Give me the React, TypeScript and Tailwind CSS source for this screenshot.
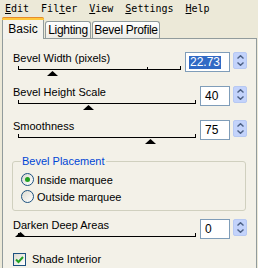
import React from "react";

function Track({ width, end, thumb, mid, dark }: { width: number; end: number; thumb: number; mid?: number; dark?: boolean }) {
  return (
    <svg width={width} height={14} className="block" shapeRendering="crispEdges">
      <rect x={5} y={4} width={end - 5 + 1} height={1} fill="#000" />
      <rect x={5} y={1} width={1} height={3} fill="#000" />
      <rect x={end} y={1} width={1} height={3} fill="#000" />
      {mid !== undefined && <rect x={mid} y={2} width={1} height={2} fill="#000" />}
      {dark ? (
        <polygon points={`${thumb - 5},5 ${thumb + 6},5 ${thumb + 0.5},0`} fill="#000" shapeRendering="auto" />
      ) : (
        <polygon points={`${thumb - 5},11 ${thumb + 6},11 ${thumb + 0.5},6`} fill="#000" shapeRendering="auto" />
      )}
    </svg>
  );
}

function Spinner() {
  return (
    <div className="ml-[3px] mt-[1px] w-[14px] h-[17px] rounded-[2px] bg-[#c3d3fb] border border-[#b7c9f3] flex flex-col items-center justify-center gap-[3px]">
      <svg width="7" height="4" viewBox="0 0 7 4" className="block">
        <path d="M0.5 3.5 L3.5 0.7 L6.5 3.5" fill="none" stroke="#4d6185" strokeWidth="1.4" />
      </svg>
      <svg width="7" height="4" viewBox="0 0 7 4" className="block">
        <path d="M0.5 0.5 L3.5 3.3 L6.5 0.5" fill="none" stroke="#4d6185" strokeWidth="1.4" />
      </svg>
    </div>
  );
}

function Row({
  label,
  leftW,
  end,
  thumb,
  mid,
  inputW,
  value,
  selected,
  dark,
}: {
  label: string;
  leftW: number;
  end: number;
  thumb: number;
  mid?: number;
  inputW: string;
  value: string;
  selected?: boolean;
  dark?: boolean;
}) {
  return (
    <div className="flex h-[34px] shrink-0">
      <div className="ml-[10px] flex flex-col" style={{ width: leftW }}>
        <div className="h-[14px] leading-[14px] text-[11px] text-black whitespace-nowrap">{label}</div>
        <Track width={leftW} end={end} thumb={thumb} mid={mid} dark={dark} />
      </div>
      <div className={`ml-[2px] mt-[1px] h-[20px] ${inputW} border border-[#7f9db9] bg-white pl-[3px] flex items-center`}>
        {selected ? (
          <span className="bg-[#316ac5] text-white text-[12px] leading-[13px] px-[1px]">{value}</span>
        ) : (
          <span className="text-black text-[12px] leading-[13px] pl-[1px]">{value}</span>
        )}
      </div>
      <Spinner />
    </div>
  );
}

function Radio({ checked, label }: { checked?: boolean; label: string }) {
  return (
    <div className="flex items-center h-[17px]">
      <div className="w-[13px] h-[13px] rounded-full border border-[#1c5180] bg-gradient-to-br from-[#dcdad0] to-white flex items-center justify-center">
        {checked && <div className="w-[5px] h-[5px] rounded-full bg-[#21a121]" />}
      </div>
      <span className="ml-[3px] text-[11px] leading-[14px] text-black">{label}</span>
    </div>
  );
}

export default function App() {
  return (
    <div className="w-[258px] h-[268px] overflow-hidden bg-[#ece9d8] font-['Liberation_Sans',Arial,sans-serif] flex flex-col">
      {/* menu */}
      <div className="h-[17px] pt-[2px] pl-[5px] flex gap-[12px] font-['DejaVu_Sans_Mono',monospace] text-[10px] leading-[14px] text-black shrink-0">
        <span><u>E</u>dit</span>
        <span>Fil<u>t</u>er</span>
        <span><u>V</u>iew</span>
        <span><u>S</u>ettings</span>
        <span><u>H</u>elp</span>
      </div>
      {/* tabs */}
      <div className="flex items-end h-[21px] ml-[2px] shrink-0 relative z-10">
        <div className="w-[42px] h-[22px] -mb-[1px] border-x border-[#919b9c] bg-[#f4f3ee] rounded-t-[3px] flex flex-col">
          <div className="h-[3px] bg-[#ffc83c] border-t border-[#e68b2c] rounded-t-[2px] -mx-[1px]" />
          <div className="flex-1 flex items-center justify-center text-[12px] text-black pb-[1px]">Basic</div>
        </div>
        <div className="ml-[1px] w-[46px] h-[17px] border border-b-0 border-[#919b9c] rounded-t-[3px] bg-gradient-to-b from-white to-[#ecebe5] flex items-center justify-center text-[12px] tracking-[-0.3px] text-black">
          Lighting
        </div>
        <div className="ml-[1px] w-[68px] h-[17px] border border-b-0 border-[#919b9c] rounded-t-[3px] bg-gradient-to-b from-white to-[#ecebe5] flex items-center justify-center text-[12px] tracking-[-0.3px] text-black">
          Bevel Profile
        </div>
      </div>
      {/* panel */}
      <div className="ml-[2px] w-[255px] flex-1 border border-b-0 border-[#919b9c] bg-[#f3f1e8] flex flex-col">
        <div className="mt-[12px]" />
        <Row label="Bevel Width (pixels)" leftW={170} end={167} mid={134} thumb={39} inputW="w-[45px]" value="22.73" selected />
        <Row label="Bevel Height Scale" leftW={185} end={182} thumb={75} inputW="w-[30px]" value="40" />
        <Row label="Smoothness" leftW={185} end={182} thumb={137} inputW="w-[30px]" value="75" />
        <fieldset className="mt-[1px] ml-[9px] w-[234px] border border-[#d0d0bf] rounded-[3px] px-[8px] pb-[5px] shrink-0">
          <legend className="px-[1px] text-[11px] leading-[14px] text-[#0046d5]">Bevel Placement</legend>
          <div className="pt-[3px]">
            <Radio checked label="Inside marquee" />
            <Radio label="Outside marquee" />
          </div>
        </fieldset>
        <div className="mt-[7px]" />
        <Row label="Darken Deep Areas" leftW={185} end={182} thumb={7} inputW="w-[30px]" value="0" dark />
        <div className="ml-[10px] flex items-center h-[14px]">
          <div className="w-[13px] h-[13px] border border-[#1c5180] bg-gradient-to-br from-[#dcdad0] to-white flex items-center justify-center">
            <svg width="9" height="9" viewBox="0 0 9 9">
              <path d="M1 4.5 L3.5 7 L8 2" fill="none" stroke="#21a121" strokeWidth="2" />
            </svg>
          </div>
          <span className="ml-[6px] text-[11px] leading-[14px] text-black">Shade Interior</span>
        </div>
      </div>
    </div>
  );
}
